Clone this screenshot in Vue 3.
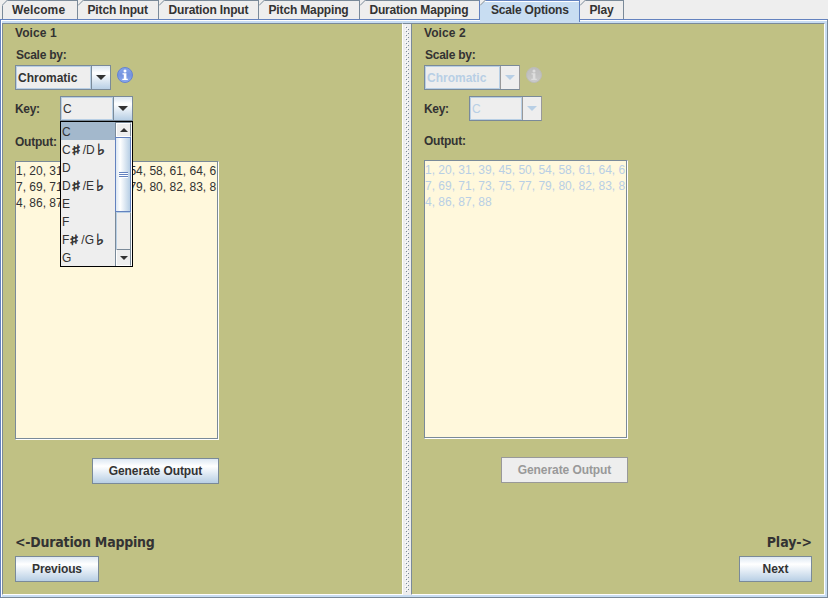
<script setup>
const tabs = [
  { label: 'Welcome', width: 76, spacing: 0.1 },
  { label: 'Pitch Input', width: 81, spacing: -0.15 },
  { label: 'Duration Input', width: 100, spacing: -0.15 },
  { label: 'Pitch Mapping', width: 101, spacing: -0.15 },
  { label: 'Duration Mapping', width: 120, spacing: -0.2 },
  { label: 'Scale Options', width: 100, spacing: -0.18, active: true },
  { label: 'Play', width: 44, spacing: -0.2 },
]
const voices = [
  { id: 1, nav: '<-Duration Mapping', button: 'Previous' },
  { id: 2, nav: 'Play->', button: 'Next', disabled: true },
]
const lines = [
  '1, 20, 31, 39, 45, 50, 54, 58, 61, 64, 6',
  '7, 69, 71, 73, 75, 77, 79, 80, 82, 83, 8',
  '4, 86, 87, 88',
]
const keys = [['C'], ['C', 'D'], ['D'], ['D', 'E'], ['E'], ['F'], ['F', 'G'], ['G']]
</script>

<template>
  <div class="window">
    <nav class="tabs">
      <div
        v-for="t in tabs"
        :key="t.label"
        class="tab"
        :class="{ active: t.active }"
        :style="{ width: t.width + 'px', letterSpacing: t.spacing + 'px' }"
      >
        <svg class="corner" width="6" height="6" viewBox="0 0 6 6">
          <path d="M0 0H6L0 6Z" fill="#eee" />
          <path d="M0 5.5L5.5 0" stroke="#7a8a99" fill="none" />
        </svg>
        <span>{{ t.label }}</span>
      </div>
    </nav>
    <div class="frame">
      <template v-for="v in voices" :key="v.id">
        <div v-if="v.id === 2" class="divider">
          <svg width="8" height="571">
            <defs>
              <pattern id="bumps" width="4" height="4" patternUnits="userSpaceOnUse">
                <rect x="0" y="0" width="1" height="1" fill="#fff" />
                <rect x="1" y="1" width="1" height="1" fill="#7a8a99" />
                <rect x="2" y="2" width="1" height="1" fill="#fff" />
                <rect x="3" y="3" width="1" height="1" fill="#7a8a99" />
              </pattern>
            </defs>
            <rect x="0" y="0" width="4" height="566" fill="url(#bumps)" transform="translate(2 2)" />
          </svg>
        </div>
        <section class="pane" :class="{ second: v.id === 2, off: v.disabled }">
          <div class="label voice">Voice {{ v.id }}</div>
          <div class="label scale">Scale by:</div>
          <div class="row">
            <div class="combo wide">
              <span class="value bold">Chromatic</span>
              <span class="arrow">
                <svg width="10" height="5" viewBox="0 0 10 5"><path d="M0 0H10L5 5Z" /></svg>
              </span>
            </div>
            <svg class="info" width="16" height="16" viewBox="0 0 16 16">
              <defs>
                <linearGradient :id="'ball' + v.id" x1="0" y1="0" x2="0" y2="1">
                  <stop offset="0" :stop-color="v.disabled ? '#bdbdbd' : '#86a6ea'" />
                  <stop offset=".5" :stop-color="v.disabled ? '#c2c2c2' : '#7593df'" />
                  <stop offset="1" :stop-color="v.disabled ? '#cccccc' : '#8cacf0'" />
                </linearGradient>
              </defs>
              <circle cx="8" cy="8" r="7.5" :fill="`url(#ball${v.id})`" :stroke="v.disabled ? '#bcbcb8' : '#6683cf'" />
              <g :fill="v.disabled ? '#dedede' : '#fff'">
                <circle cx="8" cy="4" r="1.5" />
                <path d="M5.5 6.3H9.4V11.8H10.8V13H5.3V11.8H6.8V7.5H5.5Z" />
              </g>
            </svg>
          </div>
          <div class="row key">
            <div class="label">Key:</div>
            <div class="combo">
              <span class="value">C</span>
              <span class="arrow">
                <svg width="10" height="5" viewBox="0 0 10 5"><path d="M0 0H10L5 5Z" /></svg>
              </span>
              <div v-if="!v.disabled" class="popup">
                <div class="list">
                  <div v-for="(k, i) in keys" :key="i" class="item" :class="{ selected: i === 0 }">
                    <span>{{ k[0] }}</span>
                    <template v-if="k[1]">
                      <span class="acc sharp">♯</span><span>/{{ k[1] }}</span><span class="acc flat">♭</span>
                    </template>
                  </div>
                </div>
                <div class="scrollbar">
                  <div class="step">
                    <svg width="8" height="4" viewBox="0 0 8 4"><path d="M4 0L8 4H0Z" /></svg>
                  </div>
                  <div class="thumb"><i></i><i></i><i></i></div>
                  <div class="track"></div>
                  <div class="step down">
                    <svg width="8" height="4" viewBox="0 0 8 4"><path d="M0 0H8L4 4Z" /></svg>
                  </div>
                </div>
              </div>
            </div>
          </div>
          <div class="label output">Output:</div>
          <div class="area"><div class="text"><div v-for="l in lines" :key="l">{{ l }}</div></div></div>
          <button class="btn generate" :disabled="v.disabled">Generate Output</button>
          <div class="footer">
            <div class="heading">{{ v.nav }}</div>
            <button class="btn" :class="v.disabled ? 'next' : 'previous'">{{ v.button }}</button>
          </div>
        </section>
      </template>
    </div>
  </div>
</template>

<style>
body { background: #eee; overflow: hidden; }
</style>

<style scoped>
* { box-sizing: border-box; }
.window {
  width: 828px;
  height: 598px;
  display: flex;
  flex-direction: column;
  background: #eee;
  color: #333;
  font: 12px/14px "Liberation Sans", Arial, sans-serif;
}
.tabs { display: flex; height: 19px; padding-left: 2px; }
.tab {
  position: relative;
  height: 19px;
  border-top: 1px solid #7a8a99;
  border-right: 1px solid #7a8a99;
  font-weight: bold;
  padding: 2px 0 0 9.5px;
  white-space: nowrap;
}
.tab:first-child { border-left: 1px solid #7a8a99; padding-left: 9px; }
.tab.active {
  height: 22px;
  background: #c8ddf2;
  border-color: #6382bf;
  box-shadow: inset 0 1px #fff;
  z-index: 1;
  padding-left: 11px;
}
.tab:nth-child(5) { border-right-color: #6382bf; }
.corner { position: absolute; left: 0; top: -1px; }
.tab:first-child .corner { left: -1px; }
.frame {
  flex: 1;
  display: flex;
  border: 1px solid #6382bf;
  border-right-color: #7a8a99;
  border-bottom-color: #7a8a99;
  background: #c8ddf2;
  box-shadow: inset 1px 1px #fff;
  padding: 3px 2px 2px 1px;
}
.pane {
  display: flex;
  flex-direction: column;
  width: 401px;
  height: 572px;
  background: #c0c184;
  border: 1px solid;
  border-color: #7a8a99 #fff #fff #7a8a99;
  padding: 2px 0 0 12px;
}
.pane.second { width: 414px; }
.divider { width: 8px; height: 572px; background: #eee; border-top: 1px solid #7a8a99; }
.divider svg { display: block; }
.label { font-weight: bold; height: 14px; }
.voice { letter-spacing: 0.08px; }
.scale { margin: 8px 0 3px 1px; letter-spacing: -0.25px; }
.row { display: flex; height: 25px; }
.combo {
  position: relative;
  display: flex;
  width: 73px;
  height: 25px;
  border: 1px solid #7a8a99;
  background: #eee;
}
.combo.wide { width: 96px; }
.value {
  flex: 1;
  border: 1px solid #b8cfe5;
  padding: 4px 0 0 1px;
}
.bold { font-weight: bold; }
.arrow {
  display: flex;
  justify-content: center;
  align-items: center;
  width: 19px;
  border-left: 1px solid #7a8a99;
  background: linear-gradient(#dde8f3, #fff 30%, #b8cfe5);
}
.arrow path, .step path { fill: #333; }
.info { margin: 2px 0 0 6px; }
.key { margin-top: 6px; }
.key .label { width: 45px; padding-top: 6px; letter-spacing: -0.3px; }
.output { margin-top: 14px; letter-spacing: -0.22px; }
.off .value { color: #b8cfe5; }
.off .arrow { background: #eee; border-color: #999; }
.off .combo { border-right-color: #999; }
.off .arrow path { fill: #b8cfe5; }
.popup {
  position: absolute;
  z-index: 3;
  left: -1px;
  top: 24px;
  display: flex;
  width: 73px;
  height: 146px;
  border: 1px solid #000;
  background: #eee;
}
.list { width: 54px; }
.item { display: flex; height: 18px; padding: 3px 0 0 1px; white-space: nowrap; }
.item.selected { background: #a3b8cc; }
.acc {
  font-family: "DejaVu Sans", sans-serif;
  font-weight: bold;
  -webkit-text-stroke: 0.5px #333;
  transform-origin: 0 50%;
}
.sharp { width: 12px; font-size: 14px; transform: scaleX(1.5); }
.flat { width: 8px; margin-left: 2px; font-size: 15px; transform: scaleX(1.15); }
.scrollbar {
  display: flex;
  flex-direction: column;
  width: 17px;
  border-left: 1px solid #7a8a99;
  border-top: 1px solid #7a8a99;
  border-right: 1px solid #fff;
}
.step {
  display: flex;
  justify-content: center;
  align-items: center;
  height: 14px;
  border: 1px solid #fff;
  border-right-color: #7a8a99;
  background: #eee;
}
.step.down { height: 17px; border-top-color: #7a8a99; }
.thumb {
  display: flex;
  flex-direction: column;
  align-items: center;
  justify-content: center;
  gap: 1px;
  height: 75px;
  margin-left: -1px;
  border: 1px solid #6382bf;
  background: linear-gradient(90deg, #dde8f3, #fff 30%, #b8cfe5);
}
.thumb i { width: 9px; height: 1px; background: #6382bf; box-shadow: 0 1px #fff; }
.track { flex: 1; border-left: 1px solid #b8cfe5; border-right: 1px solid #7a8a99; border-top: 1px solid #b8cfe5; }
.area {
  width: 204px;
  height: 279px;
  margin-top: 12px;
  border: 1px solid;
  border-color: #7a8a99 #fff #fff #7a8a99;
}
.text {
  height: 277px;
  background: #fff8dc;
  border: 1px solid #7a8a99;
  border-top: 0;
  border-left: 0;
  padding-top: 1px;
  line-height: 16px;
  white-space: pre;
}
.off .text { color: #b8cfe5; }
.btn {
  height: 26px;
  padding: 0;
  border: 1px solid #7a8a99;
  border-radius: 0;
  background: linear-gradient(#dde8f3, #fff 30%, #b8cfe5);
  color: #333;
  font: bold 12px/14px "Liberation Sans", Arial, sans-serif;
}
.generate { width: 127px; margin: 18px 0 0 77px; letter-spacing: -0.08px; }
.generate:disabled { background: #eee; border-color: #999; color: #999; }
.previous { width: 84px; letter-spacing: -0.1px; }
.next { width: 73px; }
.footer { display: flex; flex-direction: column; align-items: flex-start; margin-top: 48px; }
.heading {
  height: 20px;
  margin-bottom: 4px;
  font: bold 14px/20px "DejaVu Sans Condensed", "DejaVu Sans", sans-serif;
  font-stretch: condensed;
  letter-spacing: -0.22px;
}
.second .footer { align-items: flex-end; padding-right: 12px; margin-top: 49px; }
.second .heading { letter-spacing: -0.05px; }
.second .output { margin-top: 13px; }
</style>
